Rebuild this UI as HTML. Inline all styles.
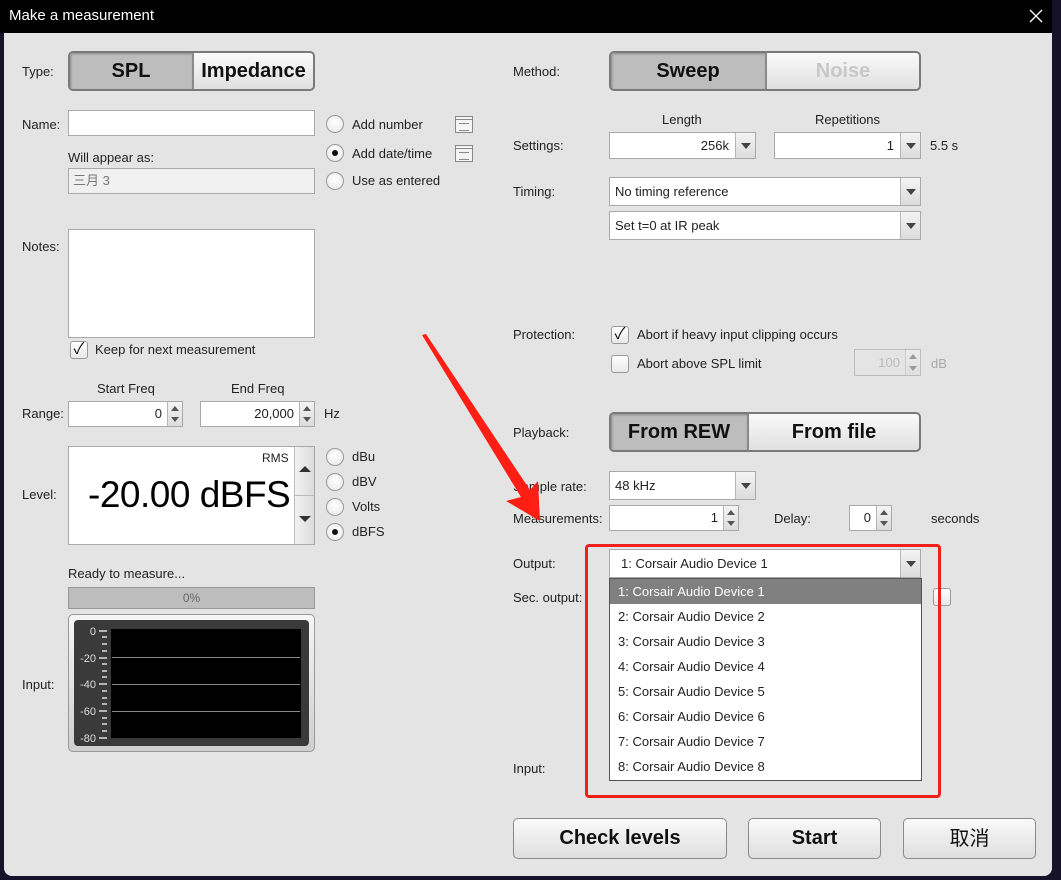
<!DOCTYPE html>
<html><head><meta charset="utf-8"><style>
*{box-sizing:border-box;margin:0;padding:0}
body{width:1061px;height:880px;overflow:hidden;background:#15122a;font-family:"Liberation Sans","Noto Sans CJK SC",sans-serif;font-size:13px;color:#222;position:relative}
.a{position:absolute}
.lbl{position:absolute;font-size:13px;color:#222;line-height:16px}
.inp{position:absolute;background:#fff;border:1px solid #a9a9a9}
.tg{position:absolute;border:2px solid #7a7a7a;border-radius:5px;display:flex;overflow:hidden;background:linear-gradient(#fafafa,#e0e0e0)}
.tg div{display:flex;align-items:center;justify-content:center;font-weight:bold;font-size:20px;color:#111}
.tg .on{background:#bdbdbd;box-shadow:inset 1px 1px 2px #888;border-right:2px solid #8a8a8a}
.rad{position:absolute;width:18px;height:18px;border-radius:50%;border:1px solid #999;background:radial-gradient(circle at 50% 40%,#fff,#e6e6e6)}
.rad.s::after{content:"";position:absolute;left:5px;top:5px;width:6px;height:6px;border-radius:50%;background:#111}
.cb{position:absolute;width:18px;height:18px;border:1px solid #999;border-radius:3px;background:linear-gradient(#fff,#e8e8e8);font-size:16px;line-height:16px;text-align:center;color:#111}
.cmb{position:absolute;background:#fff;border:1px solid #a9a9a9;font-size:13px;padding-left:5px}
.cmb .ar{position:absolute;right:0;top:0;bottom:0;width:20px;background:linear-gradient(#f4f4f4,#dcdcdc);border-left:1px solid #b5b5b5}
.cmb .ar::after{content:"";position:absolute;left:5px;top:50%;margin-top:-3px;border-left:5px solid transparent;border-right:5px solid transparent;border-top:6px solid #444}
.sp{position:absolute;background:#fff;border:1px solid #a9a9a9;text-align:right;padding-right:20px;font-size:13px}
.sp .bt{position:absolute;right:0;top:0;bottom:0;width:15px;background:linear-gradient(#f4f4f4,#dcdcdc);border-left:1px solid #b5b5b5}
.sp .bt::before{content:"";position:absolute;left:3px;top:4px;border-left:4px solid transparent;border-right:4px solid transparent;border-bottom:5px solid #555}
.sp .bt::after{content:"";position:absolute;left:3px;bottom:4px;border-left:4px solid transparent;border-right:4px solid transparent;border-top:5px solid #555}
.btn{position:absolute;border:1px solid #8a8a8a;border-radius:5px;background:linear-gradient(#fafafa,#dedede);font-weight:bold;font-size:20px;display:flex;align-items:center;justify-content:center;color:#111}
.ico{position:absolute;width:18px;height:17px;border:1px solid #888;background:#f5f5f5}
.ico::before{content:"";position:absolute;left:0;right:0;top:2px;height:1px;background:#888}
.ico::after{content:"";position:absolute;left:3px;top:6px;width:10px;height:6px;border-top:1px solid #888;border-bottom:1px solid #888}
.it{position:absolute;left:0;right:0;height:25px;line-height:25px;padding-left:8px;font-size:13px}
</style></head><body>
<div class="a" style="left:0;top:0;width:1052px;height:33px;background:#000"></div>
<div class="a" style="left:9px;top:7px;color:#fff;font-size:15px">Make a measurement</div>
<svg class="a" style="left:1029px;top:9px" width="14" height="14"><path d="M1 1L13 13M13 1L1 13" stroke="#fff" stroke-width="1.3"/></svg>
<div class="a" style="left:4px;top:33px;width:1048px;height:843px;background:#e4e4e4;border-radius:0 0 8px 8px"></div>

<div class="lbl" style="left:22px;top:64px">Type:</div>
<div class="tg" style="left:68px;top:51px;width:247px;height:40px"><div class="on" style="width:124px">SPL</div><div style="flex:1">Impedance</div></div>
<div class="lbl" style="left:22px;top:117px">Name:</div>
<div class="inp" style="left:68px;top:110px;width:247px;height:26px"></div>
<div class="lbl" style="left:68px;top:150px">Will appear as:</div>
<div class="inp" style="left:68px;top:168px;width:247px;height:26px;background:#f0f0f0;color:#777;padding-left:4px;line-height:24px">三月 3</div>
<div class="rad" style="left:326px;top:115px"></div><div class="lbl" style="left:352px;top:117px">Add number</div>
<div class="rad s" style="left:326px;top:144px"></div><div class="lbl" style="left:352px;top:146px">Add date/time</div>
<div class="rad" style="left:326px;top:172px"></div><div class="lbl" style="left:352px;top:173px">Use as entered</div>
<div class="ico" style="left:455px;top:116px"></div><div class="ico" style="left:455px;top:145px"></div>
<div class="lbl" style="left:22px;top:239px">Notes:</div>
<div class="inp" style="left:68px;top:229px;width:247px;height:109px"></div>
<div class="cb" style="left:70px;top:341px">✓</div><div class="lbl" style="left:95px;top:342px">Keep for next measurement</div>
<div class="lbl" style="left:97px;top:381px">Start Freq</div>
<div class="lbl" style="left:231px;top:381px">End Freq</div>
<div class="lbl" style="left:22px;top:406px">Range:</div>
<div class="sp" style="left:68px;top:401px;width:115px;height:26px;line-height:24px">0<div class="bt"></div></div>
<div class="sp" style="left:200px;top:401px;width:115px;height:26px;line-height:24px">20,000<div class="bt"></div></div>
<div class="lbl" style="left:324px;top:406px">Hz</div>
<div class="lbl" style="left:22px;top:487px">Level:</div>
<div class="inp" style="left:68px;top:446px;width:247px;height:99px"></div>
<div class="a" style="left:294px;top:447px;width:20px;height:97px;background:linear-gradient(90deg,#f2f2f2,#dcdcdc);border-left:1px solid #bbb"></div>
<div class="a" style="left:295px;top:495px;width:19px;height:1px;background:#bbb"></div>
<div class="a" style="left:299px;top:466px;border-left:6px solid transparent;border-right:6px solid transparent;border-bottom:6px solid #333"></div>
<div class="a" style="left:299px;top:516px;border-left:6px solid transparent;border-right:6px solid transparent;border-top:6px solid #333"></div>
<div class="lbl" style="left:262px;top:450px;font-size:12px">RMS</div>
<div class="a" style="left:88px;top:474px;font-size:37px;color:#000;letter-spacing:-0.5px">-20.00 dBFS</div>
<div class="rad" style="left:326px;top:448px"></div><div class="lbl" style="left:352px;top:449px">dBu</div>
<div class="rad" style="left:326px;top:473px"></div><div class="lbl" style="left:352px;top:474px">dBV</div>
<div class="rad" style="left:326px;top:498px"></div><div class="lbl" style="left:352px;top:499px">Volts</div>
<div class="rad s" style="left:326px;top:523px"></div><div class="lbl" style="left:352px;top:524px">dBFS</div>
<div class="lbl" style="left:68px;top:566px">Ready to measure...</div>
<div class="a" style="left:68px;top:587px;width:247px;height:22px;background:#bdbdbd;border:1px solid #999;text-align:center;line-height:20px;color:#666;font-size:12px">0%</div>
<div class="a" style="left:68px;top:614px;width:247px;height:138px;border:1px solid #999;border-radius:5px;background:linear-gradient(#f6f6f6,#cfcfcf)"></div>
<div class="a" style="left:74px;top:620px;width:235px;height:126px;background:#3a3a3a;border-radius:4px"></div>
<div class="a" style="left:111px;top:629px;width:190px;height:109px;background:#000"></div>
<div class="a" style="left:112px;top:657px;width:188px;height:1px;background:#888"></div>
<div class="a" style="left:112px;top:684px;width:188px;height:1px;background:#888"></div>
<div class="a" style="left:112px;top:711px;width:188px;height:1px;background:#888"></div>
<svg class="a" style="left:74px;top:620px" width="40" height="126"><g fill="#ddd" font-family="Liberation Sans" font-size="11" text-anchor="end"><text x="22" y="15">0</text><text x="22" y="42">-20</text><text x="22" y="68">-40</text><text x="22" y="95">-60</text><text x="22" y="122">-80</text></g><g stroke="#ddd" stroke-width="1.5"><path d="M25 11h8M28 17h5M28 24h5M28 31h5M25 38h8M28 44h5M28 51h5M28 57h5M25 64h8M28 71h5M28 78h5M28 84h5M25 91h8M28 98h5M28 104h5M28 111h5M25 118h8"/></g></svg>
<div class="lbl" style="left:22px;top:677px">Input:</div>

<div class="lbl" style="left:513px;top:64px">Method:</div>
<div class="tg" style="left:609px;top:51px;width:312px;height:40px"><div class="on" style="width:156px">Sweep</div><div style="flex:1;color:#c8c8c8">Noise</div></div>
<div class="lbl" style="left:662px;top:112px">Length</div>
<div class="lbl" style="left:815px;top:112px">Repetitions</div>
<div class="lbl" style="left:513px;top:138px">Settings:</div>
<div class="cmb" style="left:609px;top:132px;width:147px;height:27px;text-align:right;padding-right:26px;line-height:25px">256k<div class="ar"></div></div>
<div class="cmb" style="left:774px;top:132px;width:147px;height:27px;text-align:right;padding-right:26px;line-height:25px">1<div class="ar"></div></div>
<div class="lbl" style="left:930px;top:138px">5.5 s</div>
<div class="lbl" style="left:513px;top:184px">Timing:</div>
<div class="cmb" style="left:609px;top:177px;width:312px;height:29px;line-height:27px">No timing reference<div class="ar"></div></div>
<div class="cmb" style="left:609px;top:211px;width:312px;height:29px;line-height:27px">Set t=0 at IR peak<div class="ar"></div></div>
<div class="lbl" style="left:513px;top:327px">Protection:</div>
<div class="cb" style="left:611px;top:326px">✓</div><div class="lbl" style="left:637px;top:327px">Abort if heavy input clipping occurs</div>
<div class="cb" style="left:611px;top:355px"></div><div class="lbl" style="left:637px;top:356px">Abort above SPL limit</div>
<div class="sp" style="left:854px;top:349px;width:67px;height:27px;line-height:25px;background:#e4e4e4;color:#bbb;border-color:#bbb">100<div class="bt" style="opacity:.5"></div></div>
<div class="lbl" style="left:931px;top:356px;color:#aaa">dB</div>
<div class="lbl" style="left:513px;top:425px">Playback:</div>
<div class="tg" style="left:609px;top:412px;width:312px;height:40px"><div class="on" style="width:138px">From REW</div><div style="flex:1">From file</div></div>
<div class="lbl" style="left:513px;top:479px">Sample rate:</div>
<div class="cmb" style="left:609px;top:471px;width:147px;height:29px;line-height:27px">48 kHz<div class="ar"></div></div>
<div class="lbl" style="left:513px;top:511px">Measurements:</div>
<div class="sp" style="left:609px;top:505px;width:130px;height:26px;line-height:24px">1<div class="bt"></div></div>
<div class="lbl" style="left:774px;top:511px">Delay:</div>
<div class="sp" style="left:875px;top:505px;width:17px;height:26px;line-height:24px;border:none;background:none"></div>
<div class="sp" style="left:849px;top:505px;width:43px;height:26px;line-height:24px">0<div class="bt"></div></div>
<div class="lbl" style="left:931px;top:511px">seconds</div>
<div class="lbl" style="left:513px;top:556px">Output:</div>
<div class="cmb" style="left:609px;top:549px;width:312px;height:29px;padding-left:11px;line-height:27px">1: Corsair Audio Device 1<div class="ar"></div></div>
<div class="lbl" style="left:513px;top:590px">Sec. output:</div>
<div class="cb" style="left:933px;top:588px"></div>
<div class="lbl" style="left:513px;top:761px">Input:</div>
<div class="a" style="left:609px;top:578px;width:313px;height:203px;background:#fff;border:1px solid #555">
<div class="it" style="top:0;background:#808080;color:#fff">1: Corsair Audio Device 1</div>
<div class="it" style="top:25px">2: Corsair Audio Device 2</div>
<div class="it" style="top:50px">3: Corsair Audio Device 3</div>
<div class="it" style="top:75px">4: Corsair Audio Device 4</div>
<div class="it" style="top:100px">5: Corsair Audio Device 5</div>
<div class="it" style="top:125px">6: Corsair Audio Device 6</div>
<div class="it" style="top:150px">7: Corsair Audio Device 7</div>
<div class="it" style="top:175px">8: Corsair Audio Device 8</div>
</div>
<div class="a" style="left:585px;top:544px;width:356px;height:254px;border:3px solid #f0201a;border-radius:4px"></div>
<svg class="a" style="left:0;top:0" width="1061" height="880"><polygon points="422,335 426,334 530,490 538,481 540,521 506,501 521,497" fill="#ff1e14"/></svg>

<div class="btn" style="left:513px;top:818px;width:214px;height:41px">Check levels</div>
<div class="btn" style="left:748px;top:818px;width:133px;height:41px">Start</div>
<div class="btn" style="left:903px;top:818px;width:133px;height:41px;font-weight:normal;padding-bottom:4px">取消</div>
</body></html>
